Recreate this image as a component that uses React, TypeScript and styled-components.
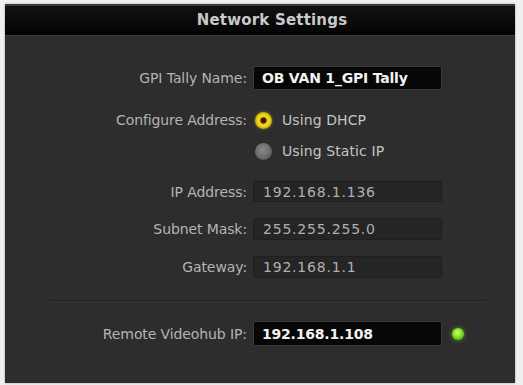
import * as React from "react";
import styled, { createGlobalStyle } from "styled-components";

const GlobalStyle = createGlobalStyle`
  html, body {
    margin: 0;
    padding: 0;
    background: #efefef;
  }
  body {
    font-family: "DejaVu Sans", "Liberation Sans", sans-serif;
  }
`;

const Page = styled.div`
  width: 523px;
  height: 385px;
  padding: 4px 8px 2px 5px;
  box-sizing: border-box;
`;

const Panel = styled.div`
  width: 510px;
  height: 379px;
  background: #2d2d2d;
  box-shadow: 0 0 2px rgba(0, 0, 0, 0.35);
  display: flex;
  flex-direction: column;
`;

const Header = styled.div`
  height: 27px;
  padding-left: 24px;
  border-top: 2px solid #3a3a3a;
  border-bottom: 2px solid #000;
  background: linear-gradient(#111, #050505);
  display: flex;
  align-items: center;
  justify-content: center;
  color: #c9c9c9;
  font-weight: bold;
  font-size: 15px;
  letter-spacing: 0.2px;
  box-shadow: 0 1px 0 #3c3c3c;
`;

const Form = styled.div`
  display: flex;
  flex-direction: column;
`;

const Row = styled.div<{ $top: number; $h: number }>`
  display: grid;
  grid-template-columns: 242px 189px 1fr;
  column-gap: 6px;
  align-items: center;
  margin-top: ${(p) => p.$top}px;
  height: ${(p) => p.$h}px;
`;

const Label = styled.div`
  text-align: right;
  color: #b4b4b4;
  font-size: 14px;
  letter-spacing: -0.1px;
  white-space: nowrap;
`;

const Field = styled.div<{ $strong?: boolean }>`
  height: 100%;
  box-sizing: border-box;
  display: flex;
  align-items: center;
  padding-left: ${(p) => (p.$strong ? 8 : 9)}px;
  border-radius: 2px;
  background: ${(p) => (p.$strong ? "#070707" : "#252525")};
  border: 1px solid ${(p) => (p.$strong ? "#3a3a3a" : "#1f1f1f")};
  color: ${(p) => (p.$strong ? "#f2f2f2" : "#b0b0b0")};
  font-weight: ${(p) => (p.$strong ? "bold" : "normal")};
  font-size: 14px;
  letter-spacing: ${(p) => (p.$strong ? -0.2 : 0.8)}px;
  white-space: nowrap;
`;

const RadioOption = styled.div`
  display: flex;
  align-items: center;
  gap: 10px;
  margin-left: 2px;
  color: #c4c4c4;
  font-size: 14px;
  letter-spacing: 0.1px;
  white-space: nowrap;
`;

const RadioDot = styled.span<{ $on?: boolean }>`
  width: 17px;
  height: 17px;
  border-radius: 50%;
  box-sizing: border-box;
  flex: none;
  background: ${(p) =>
    p.$on
      ? "radial-gradient(circle, #4a1500 0 2.5px, #d8b800 3.5px, #f4e030 5px, #c9a800 8.5px)"
      : "radial-gradient(circle at 45% 40%, #8a8a8a, #636363 70%, #4c4c4c)"};
  box-shadow: ${(p) => (p.$on ? "0 0 3px rgba(240, 210, 0, 0.5)" : "0 0 1px #222")};
`;

const Divider = styled.div`
  margin: 22px 28px 0 45px;
  height: 0;
  border-top: 1px solid #1f1f1f;
  border-bottom: 1px solid #363636;
`;

const Led = styled.span`
  width: 12px;
  height: 12px;
  border-radius: 50%;
  margin-left: 4px;
  background: radial-gradient(circle at 45% 40%, #d4ff7a, #7ee020 45%, #3f9a00 100%);
  box-shadow: 0 0 4px rgba(120, 230, 30, 0.7);
`;

const App: React.FC = () => {
  return (
    <Page>
      <GlobalStyle />
      <Panel>
        <Header>Network Settings</Header>
        <Form>
          <Row $top={31} $h={24}>
            <Label>GPI Tally Name:</Label>
            <Field $strong>OB VAN 1_GPI Tally</Field>
          </Row>
          <Row $top={20} $h={20}>
            <Label>Configure Address:</Label>
            <RadioOption>
              <RadioDot $on />
              Using DHCP
            </RadioOption>
          </Row>
          <Row $top={11} $h={20}>
            <span />
            <RadioOption>
              <RadioDot />
              Using Static IP
            </RadioOption>
          </Row>
          <Row $top={20} $h={21}>
            <Label>IP Address:</Label>
            <Field>192.168.1.136</Field>
          </Row>
          <Row $top={16} $h={22}>
            <Label>Subnet Mask:</Label>
            <Field>255.255.255.0</Field>
          </Row>
          <Row $top={16} $h={22}>
            <Label>Gateway:</Label>
            <Field>192.168.1.1</Field>
          </Row>
          <Divider />
          <Row $top={19} $h={25}>
            <Label>Remote Videohub IP:</Label>
            <Field $strong>192.168.1.108</Field>
            <Led />
          </Row>
        </Form>
      </Panel>
    </Page>
  );
};

export default App;
